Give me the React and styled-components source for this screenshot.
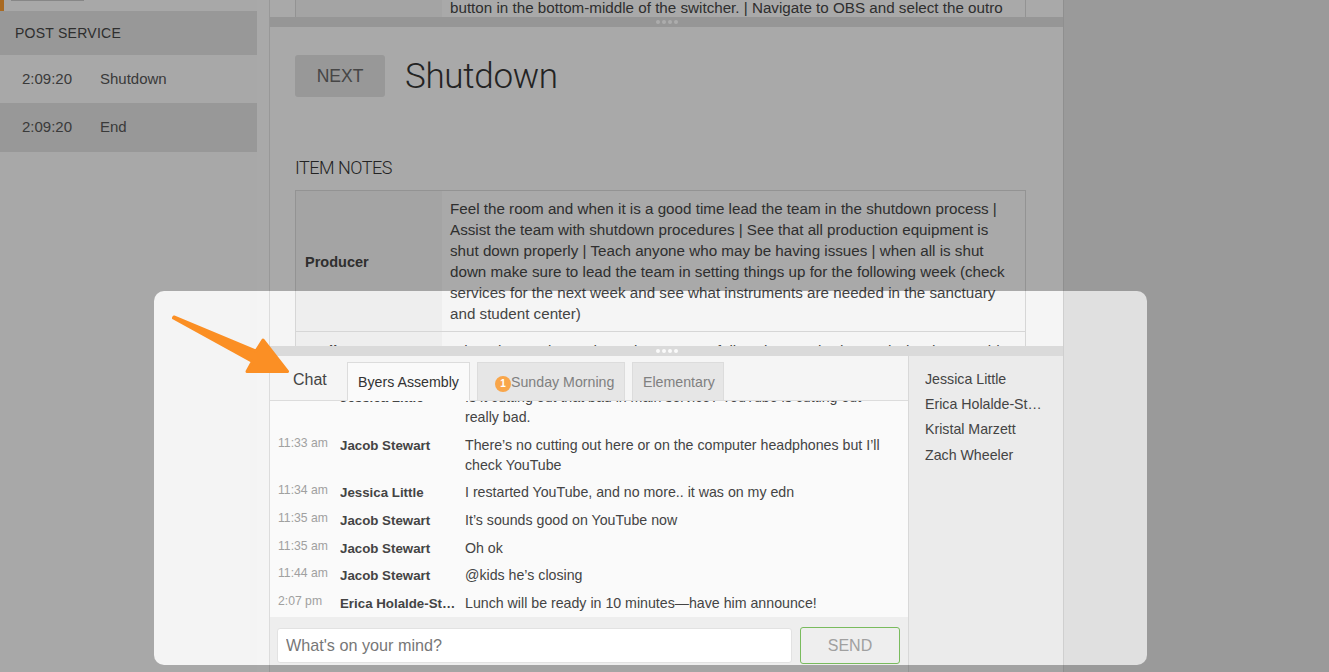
import styled, { createGlobalStyle } from "styled-components";

const GlobalStyle = createGlobalStyle`
  html, body {
    margin: 0;
    height: 100%;
    overflow: hidden;
    background: #e0e0e0;
    font-family: "Liberation Sans", Arial, sans-serif;
    color: #444;
  }
`;

const Page = styled.div`
  position: relative;
  width: 1329px;
  height: 672px;
  overflow: hidden;
  display: flex;
`;

const Sidebar = styled.aside`
  width: 257px;
  flex: none;
  background: #f4f4f4;
  padding-top: 11px;
  position: relative;
`;

const ActiveMark = styled.div`
  position: absolute;
  left: 0;
  top: 0;
  width: 4px;
  height: 11px;
  background: #f59a32;
`;

const CutButton = styled.div`
  position: absolute;
  left: 11px;
  top: 0;
  width: 73px;
  height: 1px;
  background: #c4c4c4;
`;

const SectionHeader = styled.div`
  height: 44px;
  line-height: 44px;
  padding-left: 15px;
  background: #dcdcdc;
  font-size: 14px;
  letter-spacing: 0.25px;
`;

const CueRow = styled.div`
  display: flex;
  align-items: center;
  box-sizing: border-box;
  height: ${(p) => (p.$last ? 49 : 48)}px;
  padding-bottom: ${(p) => (p.$last ? 2 : 1)}px;
  background: ${(p) => (p.$last ? "#dcdcdc" : "transparent")};
  font-size: 15px;
  color: #555;
`;

const CueTime = styled.span`
  width: 100px;
  box-sizing: border-box;
  padding-left: 22px;
  flex: none;
`;

const Gutter = styled.div`
  width: 12px;
  flex: none;
  background: #f5f5f5;
`;

const Main = styled.main`
  width: 795px;
  box-sizing: border-box;
  flex: none;
  display: flex;
  flex-direction: column;
  border-left: 1px solid #dcdcdc;
  border-right: 1px solid #cfcfcf;
  background: #f5f5f5;
`;

const TopPane = styled.div`
  flex: 1;
  min-height: 0;
  overflow: hidden;
`;

const ClippedTop = styled.div`
  height: 17px;
  margin-left: 25px;
  margin-right: 37px;
  display: grid;
  grid-template-columns: 146px 1fr;
  border-left: 1px solid #d6d6d6;
  border-right: 1px solid #d6d6d6;
  overflow: hidden;
  font-size: 15.2px;
  line-height: 21px;
`;

const ClippedLabel = styled.div`
  background: #eeeeee;
`;

const ClippedText = styled.div`
  padding: 0 8px;
  margin-top: -3px;
  white-space: nowrap;
  background: #f5f5f5;
`;

const Splitter = styled.div`
  height: 10px;
  flex: none;
  background: #dadada;
  display: flex;
  justify-content: center;
  align-items: center;
  gap: 2px;
`;

const Dot = styled.span`
  width: 4px;
  height: 4px;
  border-radius: 50%;
  background: #fafafa;
`;

const Detail = styled.section`
  padding: 28px 37px 0 25px;
`;

const TitleRow = styled.div`
  display: flex;
  align-items: center;
  gap: 20px;
`;

const NextButton = styled.div`
  width: 90px;
  height: 42px;
  line-height: 42px;
  text-align: center;
  border-radius: 3px;
  background: #dcdcdc;
  color: #666;
  font-size: 17.5px;
`;

const Title = styled.h1`
  margin: 0;
  font-family: Roboto, sans-serif;
  font-weight: 300;
  font-size: 35px;
  letter-spacing: -0.3px;
  color: #333;
`;

const NotesHeading = styled.h2`
  margin: 60px 0 11px;
  font-family: Roboto, sans-serif;
  font-weight: 300;
  font-size: 18px;
  line-height: 22px;
  letter-spacing: -0.5px;
  color: #333;
`;

const NotesTable = styled.div`
  display: grid;
  grid-template-columns: 146px 1fr;
  border: 1px solid #d6d6d6;
  font-size: 15.2px;
  line-height: 21px;
`;

const NoteLabel = styled.div`
  display: flex;
  align-items: center;
  padding: 2px 0 0 9px;
  font-size: 14.5px;
  font-weight: 700;
  background: #eeeeee;
  border-bottom: 1px solid #d6d6d6;
`;

const NoteText = styled.div`
  padding: ${(p) => (p.$loose ? "8px 8px" : "7px 8px")};
  background: #f5f5f5;
  border-bottom: 1px solid #d6d6d6;
`;

const ChatPane = styled.section`
  height: 326px;
  flex: none;
  display: flex;
  flex-direction: column;
`;

const ChatBody = styled.div`
  flex: 1;
  min-height: 0;
  display: flex;
`;

const ChatColumn = styled.div`
  width: 638px;
  flex: none;
  display: flex;
  flex-direction: column;
  background: #eeeeee;
`;

const TabBar = styled.div`
  height: 45px;
  flex: none;
  display: flex;
  align-items: flex-end;
  gap: 7px;
  background: #f5f5f5;
  border-bottom: 1px solid #dcdcdc;
  box-sizing: border-box;
  padding-left: 23px;
`;

const ChatLabel = styled.div`
  align-self: center;
  width: 47px;
  padding-top: 4px;
  font-size: 16px;
  color: #444;
`;

const Tab = styled.div`
  position: relative;
  width: ${(p) => p.$width}px;
  height: 39px;
  box-sizing: border-box;
  margin-bottom: -1px;
  padding-left: ${(p) => (p.$badged ? 33 : 10)}px;
  line-height: 38px;
  font-size: 14.2px;
  white-space: nowrap;
  border: 1px solid #dcdcdc;
  border-bottom: ${(p) => (p.$active ? "1px solid #fafafa" : "1px solid #dcdcdc")};
  background: ${(p) => (p.$active ? "#fafafa" : "#e6e6e6")};
  color: ${(p) => (p.$active ? "#333" : "#808080")};
`;

const Badge = styled.span`
  position: absolute;
  left: 17px;
  top: 13px;
  width: 16px;
  height: 16px;
  border-radius: 50%;
  background: #f9a64a;
  color: #fff;
  font-size: 10px;
  font-weight: 700;
  line-height: 16px;
  text-align: center;
`;

const Messages = styled.div`
  flex: 1;
  min-height: 0;
  overflow: hidden;
  display: flex;
  flex-direction: column;
  justify-content: flex-end;
  padding-bottom: 0.4px;
  background: #fafafa;
`;

const Message = styled.div`
  flex: none;
  display: grid;
  grid-template-columns: 62px 125px 1fr;
  padding: 3.8px 20px 3.8px 8px;
  font-size: 14.2px;
  line-height: 20px;
`;

const Time = styled.span`
  font-size: 12.2px;
  line-height: 17px;
  color: #a0a0a0;
`;

const Author = styled.span`
  box-sizing: border-box;
  padding-right: 9px;
  margin-bottom: -2px;
  font-size: 13.3px;
  font-weight: 700;
  line-height: 22px;
  color: #444;
  white-space: nowrap;
  overflow: hidden;
  text-overflow: ellipsis;
`;

const Composer = styled.form`
  height: 55px;
  flex: none;
  box-sizing: border-box;
  padding: 10px 8px 8px 7px;
  display: flex;
  align-items: center;
  gap: 8px;
`;

const ComposerInput = styled.input`
  flex: 1;
  min-width: 0;
  height: 35px;
  box-sizing: border-box;
  padding: 0 8px;
  border: 1px solid #e2e2e2;
  border-radius: 3px;
  background: #fff;
  font: 16.2px "Liberation Sans", Arial, sans-serif;

  &::placeholder {
    color: #777;
    opacity: 1;
  }
`;

const SendButton = styled.button`
  width: 100px;
  height: 37px;
  flex: none;
  border: 1px solid #79bb5d;
  border-radius: 3px;
  background: #eeeeee;
  color: #a0a0a0;
  font: 16px "Liberation Sans", Arial, sans-serif;
`;

const People = styled.ul`
  flex: 1;
  min-width: 0;
  margin: 0;
  padding: 12px 20px 0 16px;
  list-style: none;
  background: #ebebeb;
  border-left: 1px solid #d8d8d8;
`;

const Person = styled.li`
  height: 25.2px;
  line-height: 22px;
  font-size: 14.2px;
  color: #444;
  white-space: nowrap;
  overflow: hidden;
  text-overflow: ellipsis;
`;

/* dimmed page with a hole cut around the chat */
const Spotlight = styled.div`
  position: absolute;
  left: 154px;
  top: 291px;
  width: 993px;
  height: 374px;
  border-radius: 10px;
  box-shadow: 0 0 0 1400px rgba(0, 0, 0, 0.31);
  pointer-events: none;
`;

const Arrow = styled.svg`
  position: absolute;
  left: 168px;
  top: 310px;
  width: 125px;
  height: 70px;
  pointer-events: none;
`;

const messages = [
  { time: "", author: "Jessica Little", text: "Is it cutting out that bad in main service? YouTube is cutting out really bad." },
  { time: "11:33 am", author: "Jacob Stewart", text: "There’s no cutting out here or on the computer headphones but I’ll check YouTube" },
  { time: "11:34 am", author: "Jessica Little", text: "I restarted YouTube, and no more.. it was on my edn" },
  { time: "11:35 am", author: "Jacob Stewart", text: "It’s sounds good on YouTube now" },
  { time: "11:35 am", author: "Jacob Stewart", text: "Oh ok" },
  { time: "11:44 am", author: "Jacob Stewart", text: "@kids he’s closing" },
  { time: "2:07 pm", author: "Erica Holalde-Stockton", text: "Lunch will be ready in 10 minutes—have him announce!" },
];

const people = ["Jessica Little", "Erica Holalde-Stockton", "Kristal Marzett", "Zach Wheeler"];

const Handle = () => (
  <Splitter>
    <Dot />
    <Dot />
    <Dot />
    <Dot />
  </Splitter>
);

const App = () => {
  return (
    <Page>
      <GlobalStyle />
      <Sidebar>
        <ActiveMark />
        <CutButton />
        <SectionHeader>POST SERVICE</SectionHeader>
        <CueRow>
          <CueTime>2:09:20</CueTime>
          Shutdown
        </CueRow>
        <CueRow $last>
          <CueTime>2:09:20</CueTime>
          End
        </CueRow>
      </Sidebar>
      <Gutter />
      <Main>
        <TopPane>
          <ClippedTop>
            <ClippedLabel />
            <ClippedText>button in the bottom-middle of the switcher. | Navigate to OBS and select the outro</ClippedText>
          </ClippedTop>
          <Handle />
          <Detail>
            <TitleRow>
              <NextButton>NEXT</NextButton>
              <Title>Shutdown</Title>
            </TitleRow>
            <NotesHeading>ITEM NOTES</NotesHeading>
            <NotesTable>
              <NoteLabel>Producer</NoteLabel>
              <NoteText>
                Feel the room and when it is a good time lead the team in the shutdown process | Assist the team with
                shutdown procedures | See that all production equipment is shut down properly | Teach anyone who may be
                having issues | when all is shut down make sure to lead the team in setting things up for the following
                week (check services for the next week and see what instruments are needed in the sanctuary and student
                center)
              </NoteText>
              <NoteLabel>Audio</NoteLabel>
              <NoteText $loose>When the service ends, make sure you follow the attached Sound Shutdown Guide</NoteText>
            </NotesTable>
          </Detail>
        </TopPane>
        <ChatPane>
          <Handle />
          <ChatBody>
            <ChatColumn>
              <TabBar>
                <ChatLabel>Chat</ChatLabel>
                <Tab $active $width={123}>Byers Assembly</Tab>
                <Tab $badged $width={148}>
                  <Badge>1</Badge>
                  Sunday Morning
                </Tab>
                <Tab $width={92}>Elementary</Tab>
              </TabBar>
              <Messages>
                {messages.map((m, i) => (
                  <Message key={i}>
                    <Time>{m.time}</Time>
                    <Author>{m.author}</Author>
                    <span>{m.text}</span>
                  </Message>
                ))}
              </Messages>
              <Composer onSubmit={(e) => e.preventDefault()}>
                <ComposerInput placeholder="What's on your mind?" />
                <SendButton type="button">SEND</SendButton>
              </Composer>
            </ChatColumn>
            <People>
              {people.map((name) => (
                <Person key={name}>{name}</Person>
              ))}
            </People>
          </ChatBody>
        </ChatPane>
      </Main>
      <Spotlight />
      <Arrow viewBox="0 0 125 70">
        <path
          d="M6 7 L88 41 L95 30 L119.5 61.5 L79 61.5 L84.5 51.5 L5.5 8 Z"
          fill="#fb8f24"
          stroke="#fb8f24"
          strokeWidth="3"
          strokeLinejoin="round"
        />
      </Arrow>
    </Page>
  );
};

export default App;
